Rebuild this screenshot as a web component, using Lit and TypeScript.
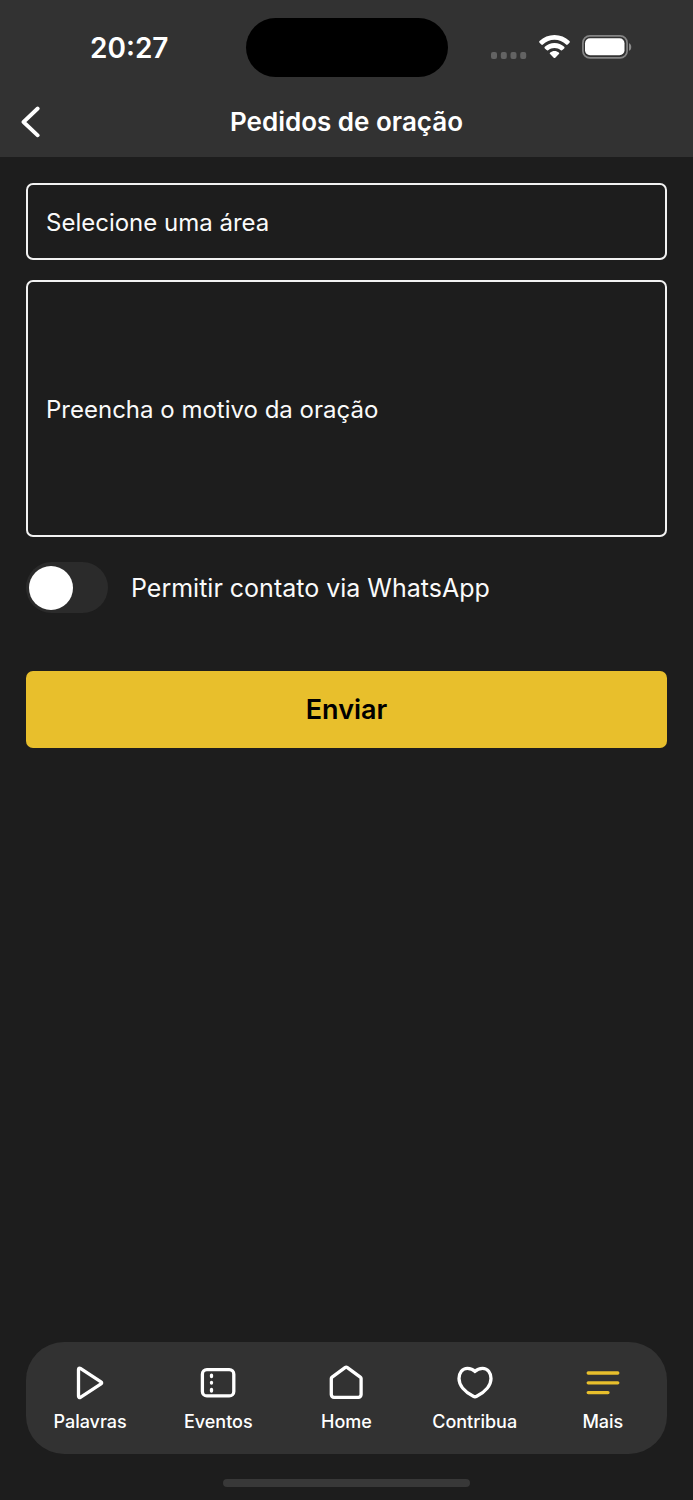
import { LitElement, html, css, svg } from "lit";
import { customElement, property, state } from "lit/decorators.js";
import { classMap } from "lit/directives/class-map.js";

interface Tab {
  id: string;
  label: string;
}

const TABS: Tab[] = [
  { id: "palavras", label: "Palavras" },
  { id: "eventos", label: "Eventos" },
  { id: "home", label: "Home" },
  { id: "contribua", label: "Contribua" },
  { id: "mais", label: "Mais" },
];

const ICONS: Record<string, unknown> = {
  palavras: svg`<path d="M8.500 6.400C8.500 5.300 9.500 4.800 10.400 5.400L31 18.900C31.900 19.500 31.900 20.300 31 20.900L10.400 34.300C9.500 34.900 8.500 34.400 8.500 33.300Z"/>`,
  eventos: svg`<rect x="4.400" y="6.700" width="31.400" height="26.200" rx="4.500"/><path d="M13.500 12.200v1.400M13.500 19.500v.6M13.500 26.500v1.600"/>`,
  home: svg`<path d="M5.300 15.600C5.300 15 5.600 14.500 6.100 14.100L19 4.600a2 2 0 0 1 2.400 0L34.300 14.100c.5.4.8.9.8 1.500V31.600a2.700 2.700 0 0 1-2.700 2.700H8a2.700 2.700 0 0 1-2.700-2.700Z"/>`,
  contribua: svg`<path d="M20 8.500C17.800 6.100 15.200 5.300 12.400 5.300C7.400 5.300 4 9.700 4 15.600C4 22.200 9.500 29 18.300 33.300C19.700 34 20.300 34 21.700 33.300C30.500 29 36 22.200 36 15.600C36 9.700 32.600 5.300 27.600 5.300C24.800 5.300 22.200 6.100 20 8.500Z"/>`,
  mais: svg`<path d="M5.200 10H34.800M5.200 19.800H34.800M5.200 29.600H25"/>`,
};

@customElement("status-bar")
export class StatusBar extends LitElement {
  static styles = css`
    :host {
      display: grid;
      grid-template-columns: 1fr auto 1fr;
      align-items: center;
      padding-top: 18px;
      color: #fff;
    }
    .time {
      padding-right: 77px;
      text-align: right;
      font-size: 28px;
      line-height: 36px;
      font-weight: 600;
    }
    .island {
      width: 202px;
      height: 59px;
      border-radius: 30px;
      background: #000;
    }
    .signals {
      display: flex;
      align-items: center;
      gap: 12px;
      padding: 0 0 2px 43px;
    }
    .signals svg {
      display: block;
    }
  `;

  render() {
    return html`
      <div class="time">20:27</div>
      <div class="island"></div>
      <div class="signals">
        <svg width="36" height="24" viewBox="0 0 36 24" fill="#636363" aria-hidden="true">
          <rect x="0" y="17" width="6" height="7" rx="2" />
          <rect x="9.800" y="17" width="6" height="7" rx="2" />
          <rect x="19.500" y="17" width="6" height="7" rx="2" />
          <rect x="29.200" y="17" width="6" height="7" rx="2" />
        </svg>
        <svg width="31" height="24" viewBox="0 0 31 24" fill="#fff" aria-hidden="true">
          <path d="M15.500 0C21.200 0 26.500 2.200 30.500 6.100C31 6.600 31 7.200 30.500 7.700L28.700 9.500C28.200 10 27.600 10 27.100 9.500C23.900 6.500 19.900 4.800 15.500 4.800C11.100 4.800 7.100 6.500 3.900 9.500C3.400 10 2.800 10 2.300 9.500L.5 7.700C0 7.200 0 6.600.5 6.100C4.500 2.200 9.800 0 15.500 0Z" />
          <path d="M15.500 8.100C19.200 8.100 22.600 9.500 25.200 11.800C25.700 12.300 25.700 12.900 25.200 13.400L23.400 15.100C22.900 15.600 22.300 15.600 21.800 15.200C20.100 13.700 17.900 12.900 15.500 12.900C13.100 12.900 10.900 13.700 9.200 15.200C8.700 15.600 8.100 15.600 7.600 15.100L5.800 13.400C5.300 12.900 5.300 12.300 5.800 11.800C8.400 9.500 11.800 8.100 15.500 8.100Z" />
          <path d="M15.500 16C17.200 16 18.700 16.600 19.800 17.500C20.400 18 20.400 18.600 19.900 19.100L16.300 22.700C15.800 23.200 15.200 23.200 14.700 22.700L11.100 19.100C10.600 18.600 10.600 18 11.200 17.500C12.300 16.600 13.800 16 15.500 16Z" />
        </svg>
        <svg width="50" height="24" viewBox="0 0 50 24" aria-hidden="true">
          <rect x="0.900" y="0.900" width="44.200" height="22" rx="7" fill="none" stroke="#858585" stroke-width="1.700" />
          <rect x="3" y="3.300" width="39.500" height="17" rx="5" fill="#fff" />
          <path d="M47 8.200C50 9 50 15 47 15.800Z" fill="#8a8a8a" />
        </svg>
      </div>
    `;
  }
}

@customElement("tab-bar")
export class TabBar extends LitElement {
  @property() active = "mais";

  static styles = css`
    :host {
      display: block;
    }
    .tabs {
      display: grid;
      grid-template-columns: repeat(5, 1fr);
      background: #323232;
      border-radius: 38px;
      padding: 21px 0 20px;
    }
    .tab {
      display: flex;
      flex-direction: column;
      align-items: center;
      gap: 7px;
      color: #fff;
      text-decoration: none;
      font-size: 18px;
      line-height: 24px;
      font-weight: 500;
    }
    .icon {
      display: block;
      fill: none;
      stroke: currentColor;
      stroke-width: 3.3;
      stroke-linecap: round;
      stroke-linejoin: round;
    }
    .active .icon {
      color: #e8bf2c;
    }
  `;

  render() {
    return html`
      <nav class="tabs">
        ${TABS.map(
          (tab) => html`
            <a
              class=${classMap({ tab: true, active: tab.id === this.active })}
              href="#${tab.id}"
            >
              <svg class="icon" width="40" height="40" viewBox="0 0 40 40" aria-hidden="true">
                ${ICONS[tab.id]}
              </svg>
              <span>${tab.label}</span>
            </a>
          `
        )}
      </nav>
    `;
  }
}

@customElement("app-root")
export class AppRoot extends LitElement {
  @state() private whatsapp = false;

  static styles = css`
    :host {
      display: flex;
      flex-direction: column;
      min-height: 100vh;
      background: #1d1d1d;
      color: #fff;
      font-family: Inter, "Liberation Sans", sans-serif;
    }
    *,
    *::before {
      box-sizing: border-box;
    }
    .top {
      background: #323232;
    }
    .header {
      display: grid;
      grid-template-columns: 60px 1fr 60px;
      align-items: center;
      height: 80px;
      padding-top: 10px;
    }
    .back {
      display: flex;
      padding: 0 0 0 20px;
      border: 0;
      background: none;
      color: inherit;
    }
    .title {
      margin: 0;
      text-align: center;
      font-size: 26px;
      line-height: 34px;
      font-weight: 600;
    }
    .form {
      flex: 1;
      display: flex;
      flex-direction: column;
      gap: 20px;
      padding: 26px;
    }
    .field {
      display: block;
      width: 100%;
      margin: 0;
      padding: 0 18px;
      border: 2px solid #f2f2f2;
      border-radius: 7px;
      background: transparent;
      color: #fafafa;
      font-family: inherit;
      font-size: 24px;
      line-height: 32px;
      appearance: none;
      outline: none;
      resize: none;
    }
    .area {
      height: 77px;
      padding-top: 2px;
    }
    .reason {
      height: 257px;
      padding-top: 112px;
    }
    .reason::placeholder {
      color: #fafafa;
      opacity: 1;
    }
    .option {
      display: flex;
      align-items: center;
      gap: 23px;
      margin-top: 5px;
      font-size: 25px;
      line-height: 32px;
      color: #fafafa;
    }
    .switch {
      flex: none;
      display: flex;
      align-items: center;
      width: 82px;
      height: 51px;
      margin: 0;
      padding: 0 3px;
      border-radius: 26px;
      background: #2b2b2b;
      appearance: none;
    }
    .switch::before {
      content: "";
      width: 44px;
      height: 44px;
      border-radius: 50%;
      background: #fff;
    }
    .switch:checked {
      justify-content: flex-end;
      background: #e8bf2c;
    }
    .send {
      height: 77px;
      margin-top: 38px;
      padding-top: 2px;
      border: 0;
      border-radius: 7px;
      background: #e8bf2c;
      color: #000;
      font-family: inherit;
      font-size: 27px;
      line-height: 34px;
      font-weight: 600;
    }
    .bottom {
      padding: 0 26px 13px;
    }
    .indicator {
      width: 247px;
      height: 8px;
      margin: 25px auto 0;
      border-radius: 4px;
      background: #383838;
    }
  `;

  render() {
    return html`
      <div class="top">
        <status-bar></status-bar>
        <header class="header">
          <button class="back" type="button" aria-label="Voltar">
            <svg
              width="22"
              height="32"
              viewBox="0 0 22 32"
              fill="none"
              stroke="currentColor"
              stroke-width="3.800"
              stroke-linecap="round"
              stroke-linejoin="round"
              aria-hidden="true"
            >
              <path d="M17.700 2.500L3.500 16L17.700 29.300" />
            </svg>
          </button>
          <h1 class="title">Pedidos de oração</h1>
        </header>
      </div>
      <form class="form" @submit=${(e: Event) => e.preventDefault()}>
        <select class="field area" aria-label="Área">
          <option value="" selected>Selecione uma área</option>
        </select>
        <textarea
          class="field reason"
          aria-label="Motivo da oração"
          placeholder="Preencha o motivo da oração"
        ></textarea>
        <label class="option">
          <input
            class="switch"
            type="checkbox"
            role="switch"
            .checked=${this.whatsapp}
            @change=${(e: Event) => (this.whatsapp = (e.target as HTMLInputElement).checked)}
          />
          <span>Permitir contato via WhatsApp</span>
        </label>
        <button class="send" type="submit">Enviar</button>
      </form>
      <footer class="bottom">
        <tab-bar active="mais"></tab-bar>
        <div class="indicator"></div>
      </footer>
    `;
  }
}
